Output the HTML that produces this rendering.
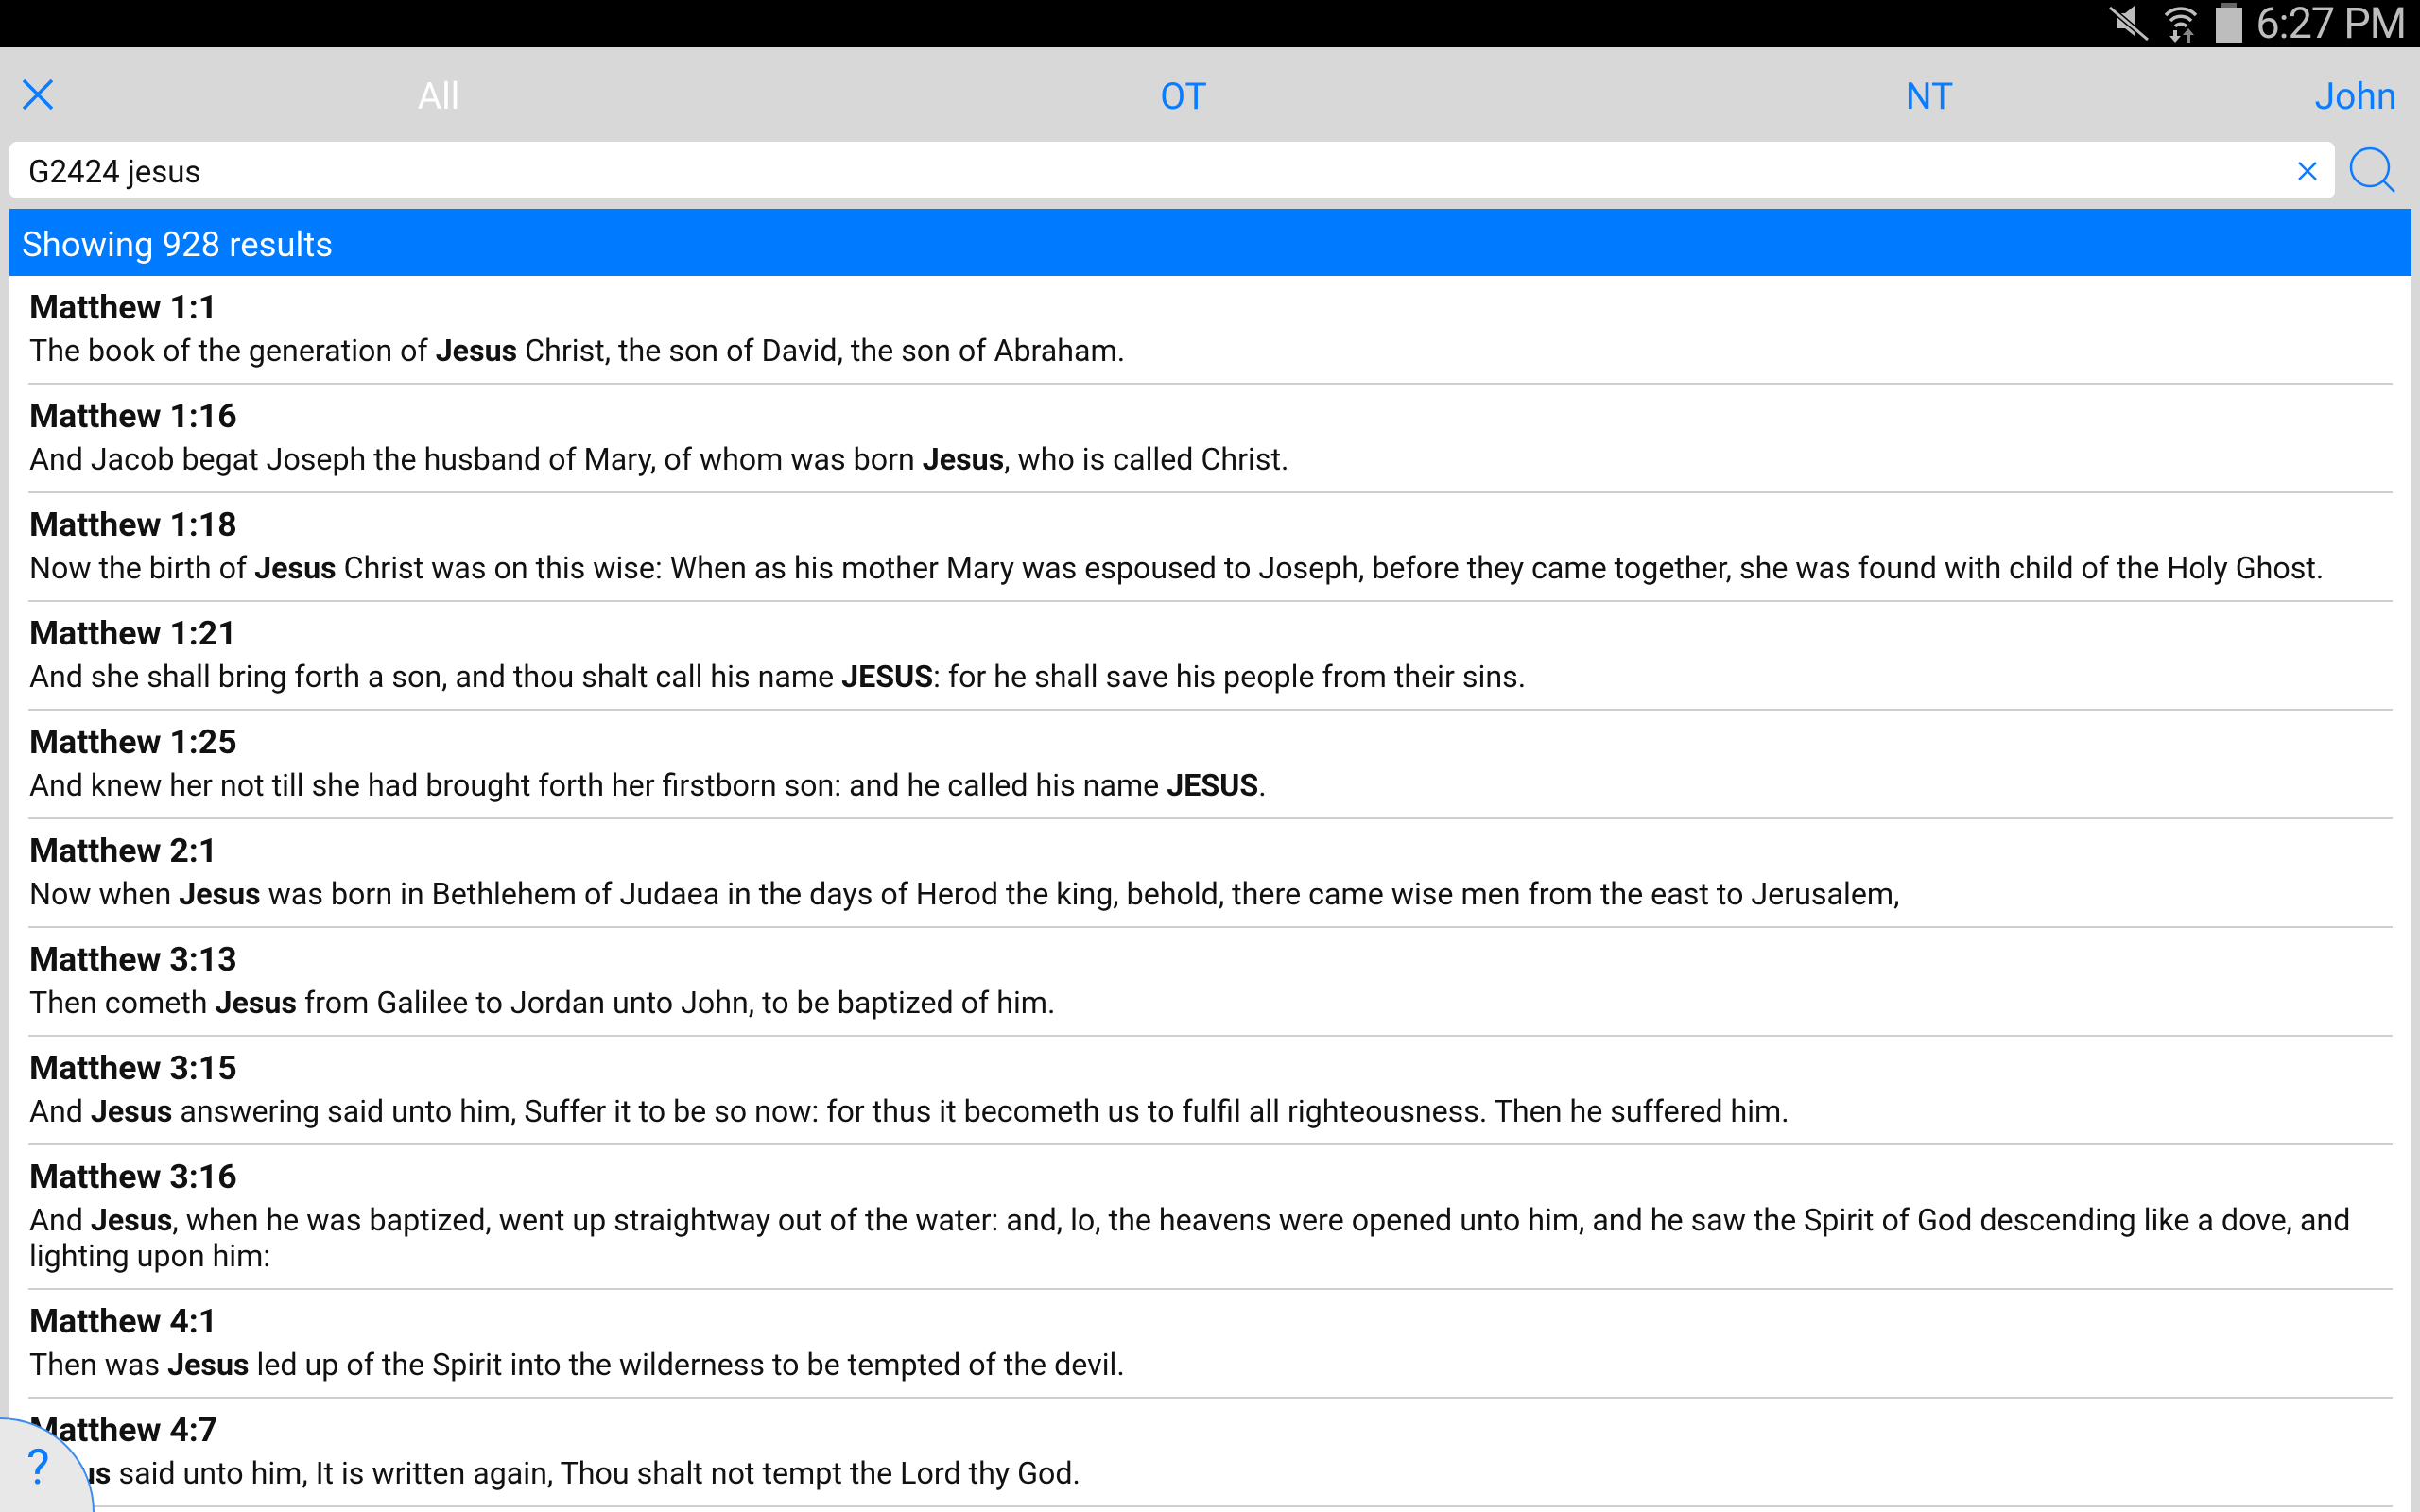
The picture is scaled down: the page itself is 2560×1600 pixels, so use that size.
<!DOCTYPE html>
<html><head><meta charset="utf-8"><style>
*{margin:0;padding:0;box-sizing:border-box}
html,body{width:2560px;height:1600px;overflow:hidden}
body{background:#d8d8d8;font-family:"Roboto","Liberation Sans",sans-serif}
.wrap{position:relative;width:2560px;height:1600px;overflow:hidden;background:#d8d8d8}
.sb{position:absolute;left:0;top:0;width:2560px;height:50px;background:#000}
.time{position:absolute;right:15px;top:-2px;font-size:45px;color:#bdbdbd;letter-spacing:-1px}
.tab{position:absolute;top:79px;font-size:39px;color:#0a7cff;transform:translateX(-50%)}
.search{position:absolute;left:10px;top:150px;width:2460px;height:60px;background:#fff;border-radius:8px}
.search span{position:absolute;left:20px;top:13px;font-size:33px;color:#111}
.bar{position:absolute;left:10px;top:221px;width:2541px;height:71px;background:#007bff}
.bar span{position:absolute;left:13px;top:16px;font-size:36.5px;color:#fff}
.list{position:absolute;left:10px;top:292px;width:2541px;height:1308px;background:#fff;overflow:hidden}
.it{margin:0 20px 0 20px;border-bottom:2px solid #cfcfcf;padding:10px 0 15px 1px;white-space:nowrap}
.it h{display:block;font-weight:bold;font-size:35.6px;line-height:46px;color:#111}
.it p{font-size:32.2px;line-height:38px;color:#111;margin-top:4px}
.help{position:absolute;left:-100px;top:1500px;width:200px;height:200px;border-radius:50%;background:#e8e8e8;border:2px solid #3a8ef0}
.q{position:absolute;left:28px;top:1522px;font-size:52px;color:#0a7cff}
</style></head><body><div class="wrap">
<div class="sb">
<svg style="position:absolute;left:2228px;top:4px" width="80" height="42" viewBox="0 0 80 42">
<polygon points="12,10 20,10 30,2 30,34 20,26 12,26" fill="#bdbdbd"/>
<line x1="4" y1="4" x2="44" y2="38" stroke="#000" stroke-width="6"/>
<line x1="4" y1="4" x2="44" y2="38" stroke="#bdbdbd" stroke-width="3"/>
</svg>
<svg style="position:absolute;left:2287px;top:4px" width="40" height="42" viewBox="0 0 40 42">
<path d="M4 12 A22 22 0 0 1 36 12" stroke="#bdbdbd" stroke-width="3.5" fill="none"/>
<path d="M9 18 A15 15 0 0 1 31 18" stroke="#bdbdbd" stroke-width="3.5" fill="none"/>
<path d="M14 24 A8 8 0 0 1 26 24" stroke="#bdbdbd" stroke-width="3.5" fill="none"/>
<path d="M12 28 v6 h-4 l6 7 l6 -7 h-4 v-6z" fill="#bdbdbd"/>
<path d="M26 41 v-8 h-4 l6 -7 l6 7 h-4 v8z" fill="#888"/>
</svg>
<div style="position:absolute;left:2350px;top:3px;width:16px;height:5px;background:#666"></div>
<div style="position:absolute;left:2344px;top:8px;width:28px;height:37px;background:#bdbdbd"></div>
<div class="time">6:27 PM</div>
</div>
<svg style="position:absolute;left:22px;top:82px" width="36" height="36" viewBox="0 0 36 36"><path d="M3 3L33 33M33 3L3 33" stroke="#0a7cff" stroke-width="3.5"/></svg>
<div class="tab" style="left:464px;color:#fff">All</div>
<div class="tab" style="left:1252px">OT</div>
<div class="tab" style="left:2041px">NT</div>
<div class="tab" style="left:2492px">John</div>
<div class="search"><span>G2424 jesus</span>
<svg style="position:absolute;left:2420px;top:20px" width="22" height="22" viewBox="0 0 22 22"><path d="M2 2L20 20M20 2L2 20" stroke="#0a7cff" stroke-width="2.5"/></svg>
</div>
<svg style="position:absolute;left:2480px;top:152px" width="60" height="56" viewBox="0 0 60 56"><circle cx="27" cy="25" r="20" stroke="#0a7cff" stroke-width="2.5" fill="none"/><path d="M41 39L53 51" stroke="#0a7cff" stroke-width="2.5"/></svg>
<div class="bar"><span>Showing 928 results</span></div>
<div class="list">
<div class="it"><h>Matthew 1:1</h><p>The book of the generation of <b>Jesus</b> Christ, the son of David, the son of Abraham.</p></div>
<div class="it"><h>Matthew 1:16</h><p>And Jacob begat Joseph the husband of Mary, of whom was born <b>Jesus</b>, who is called Christ.</p></div>
<div class="it"><h>Matthew 1:18</h><p>Now the birth of <b>Jesus</b> Christ was on this wise: When as his mother Mary was espoused to Joseph, before they came together, she was found with child of the Holy Ghost.</p></div>
<div class="it"><h>Matthew 1:21</h><p>And she shall bring forth a son, and thou shalt call his name <b>JESUS</b>: for he shall save his people from their sins.</p></div>
<div class="it"><h>Matthew 1:25</h><p>And knew her not till she had brought forth her firstborn son: and he called his name <b>JESUS</b>.</p></div>
<div class="it"><h>Matthew 2:1</h><p>Now when <b>Jesus</b> was born in Bethlehem of Judaea in the days of Herod the king, behold, there came wise men from the east to Jerusalem,</p></div>
<div class="it"><h>Matthew 3:13</h><p>Then cometh <b>Jesus</b> from Galilee to Jordan unto John, to be baptized of him.</p></div>
<div class="it"><h>Matthew 3:15</h><p>And <b>Jesus</b> answering said unto him, Suffer it to be so now: for thus it becometh us to fulfil all righteousness. Then he suffered him.</p></div>
<div class="it"><h>Matthew 3:16</h><p>And <b>Jesus</b>, when he was baptized, went up straightway out of the water: and, lo, the heavens were opened unto him, and he saw the Spirit of God descending like a dove, and<br>lighting upon him:</p></div>
<div class="it"><h>Matthew 4:1</h><p>Then was <b>Jesus</b> led up of the Spirit into the wilderness to be tempted of the devil.</p></div>
<div class="it"><h>Matthew 4:7</h><p><b>Jesus</b> said unto him, It is written again, Thou shalt not tempt the Lord thy God.</p></div>
</div>
<div class="help"></div>
<div class="q">?</div>
</div></body></html>
